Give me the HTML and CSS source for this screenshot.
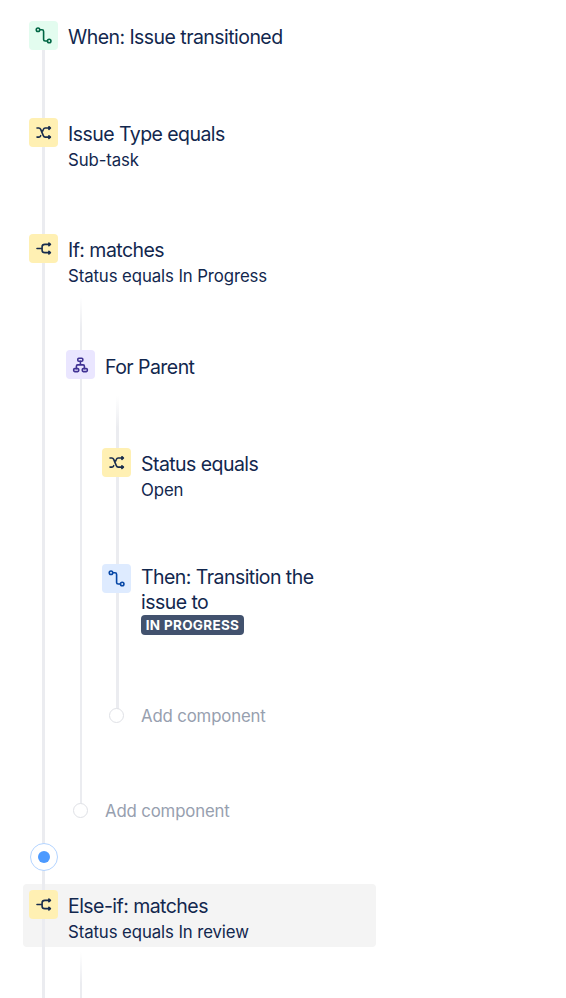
FILE: index.html
```html
<!DOCTYPE html>
<html lang="en">
<head>
    <meta charset="UTF-8">
    <meta name="viewport" content="width=device-width, initial-scale=1.0">
    <title>Automation rule</title>
    <link rel="stylesheet" href="styles.css">
</head>
<body>
<!-- shared icons -->
<svg class="sprite" width="0" height="0">
    <symbol id="transition" viewBox="0 0 29 29">
        <circle cx="9" cy="8.8" r="1.75"/>
        <circle cx="20.2" cy="20" r="1.75"/>
        <path d="M10.8 8.8h2.2q1.6 0 1.6 1.6v8q0 1.6 1.6 1.6h2.2"/>
    </symbol>
    <symbol id="shuffle" viewBox="0 0 29 29">
        <path d="M8 10h1.8q1.3 0 1.9 1.4l2.6 6.2q.6 1.5 1.9 1.5h4.6M8 19.1h1.8q1.3 0 1.9-1.4M13.7 12.9l.6-1.4q.6-1.5 1.9-1.5h4.6"/>
        <path d="M19.9 8.7l1.5 1.3-1.5 1.3zM19.9 17.8l1.5 1.3-1.5 1.3z"/>
    </symbol>
    <symbol id="branch" viewBox="0 0 29 29">
        <path d="M8 14.5h5.1M20.8 10.4h-4.9q-2.8 0-2.8 2.4v3.4q0 2.4 2.8 2.4h4.9"/>
        <path d="M19.9 9.1l1.5 1.3-1.5 1.3zM19.9 17.3l1.5 1.3-1.5 1.3z"/>
    </symbol>
    <symbol id="tree" viewBox="0 0 29 29">
        <rect x="11.8" y="8.3" width="5" height="3" rx="1"/>
        <rect x="7.7" y="18.6" width="5" height="3" rx="1"/>
        <rect x="16.3" y="18.6" width="5" height="3" rx="1"/>
        <path d="M14.4 11.3v3.6M10.4 18.6v-2.4q0-1.3 1.3-1.3h5.4q1.3 0 1.3 1.3v2.4"/>
    </symbol>
</svg>

<div class="rule">
    <div class="step step-trigger">
        <span class="icon green"><svg><use href="#transition"/></svg></span>
        <div class="info"><h3>When: Issue transitioned</h3></div>
    </div>
    <div class="step step-type">
        <span class="icon yellow"><svg><use href="#shuffle"/></svg></span>
        <div class="info">
            <h3>Issue Type equals</h3>
            <p>Sub-task</p>
        </div>
    </div>
    <div class="step step-if">
        <span class="icon yellow"><svg><use href="#branch"/></svg></span>
        <div class="info">
            <h3>If: matches</h3>
            <p>Status equals In Progress</p>
        </div>
    </div>

    <div class="branch">
        <div class="step step-parent">
            <span class="icon purple"><svg><use href="#tree"/></svg></span>
            <div class="info"><h3>For Parent</h3></div>
        </div>
        <div class="branch inner">
            <div class="step step-status">
                <span class="icon yellow"><svg><use href="#shuffle"/></svg></span>
                <div class="info">
                    <h3>Status equals</h3>
                    <p>Open</p>
                </div>
            </div>
            <div class="step step-then">
                <span class="icon blue"><svg><use href="#transition"/></svg></span>
                <div class="info wrap">
                    <h3>Then: Transition the issue to</h3>
                    <span class="status">IN PROGRESS</span>
                </div>
            </div>
            <div class="add"><i class="node"></i><span>Add component</span></div>
        </div>
        <div class="add"><i class="node"></i><span>Add component</span></div>
    </div>

    <div class="insert"><i></i></div>

    <div class="step selected">
        <span class="icon yellow"><svg><use href="#branch"/></svg></span>
        <div class="info">
            <h3>Else-if: matches</h3>
            <p>Status equals In review</p>
        </div>
    </div>
    <div class="branch last"></div>
</div>
</body>
</html>
```
FILE: styles.css
```css
*{
    box-sizing: border-box;
    margin: 0;
    padding: 0;
}
body{
    background: #fff;
    color: #12274e;
    font-family: Inter, "Liberation Sans", sans-serif;
}
.sprite{
    display: block;
}
.rule{
    position: relative;
    height: 998px;
    padding: 21px 0 0 29px;
    overflow: hidden;
}
/* vertical line behind the steps */
.rule::before,
.branch::before{
    content: "";
    position: absolute;
    z-index: 1;
    top: 0;
    bottom: 0;
    left: 13px;
    width: 3px;
    background: #ebecf0;
}
.rule::before{
    top: 30px;
    left: 42px;
}
.branch{
    position: relative;
    margin-left: 37px;
    padding-top: 53px;
}
.branch::before{
    left: 14px;
    width: 2px;
    bottom: 14px;
    background: linear-gradient(#fff, #ebecf0 32px);
}
.branch.inner{
    margin-left: 36px;
    margin-bottom: 80px;
    padding-top: 52px;
}
.branch.inner::before{
    width: 3px;
}

.step{
    display: flex;
    gap: 10px;
}
.step-trigger{
    height: 97px;
}
.step-type{
    height: 116px;
}
.step-if{
    height: 63px;
}
.step-parent{
    height: 46px;
}
.step-status{
    height: 116px;
}
.step-then{
    height: 144px;
}
.icon{
    position: relative;
    z-index: 2;
    flex: none;
    width: 29px;
    height: 29px;
    border-radius: 4px;
}
.icon svg{
    display: block;
    width: 29px;
    height: 29px;
    fill: none;
    stroke: currentColor;
    stroke-width: 1.6;
    stroke-linecap: round;
    stroke-linejoin: round;
}
.green{
    background: #e3fcef;
    color: #006644;
}
.yellow{
    background: #fff0b3;
    color: #172b4d;
}
.purple{
    background: #eae6ff;
    color: #403294;
}
.blue{
    background: #deebff;
    color: #0747a6;
}
.info{
    padding-top: 4px;
    white-space: nowrap;
}
.info h3{
    font-size: 19.5px;
    font-weight: 400;
    line-height: 25px;
    letter-spacing: -0.55px;
}
.info p{
    font-size: 16.8px;
    line-height: 26px;
    letter-spacing: -0.1px;
}
.step-parent .info{
    padding-top: 5px;
}
.info.wrap{
    width: 190px;
    padding-top: 1px;
    white-space: normal;
}
.status{
    display: block;
    width: 103px;
    height: 20px;
    border-radius: 4px;
    background: #42526e;
    color: #fff;
    font-size: 13.5px;
    font-weight: 700;
    line-height: 20px;
    letter-spacing: 0.3px;
    text-align: center;
    white-space: nowrap;
}

.add{
    display: flex;
    align-items: center;
    gap: 17px;
    height: 15px;
    margin-left: 7px;
    color: #97a0af;
    font-size: 16.8px;
    letter-spacing: -0.15px;
    white-space: nowrap;
}
.node{
    position: relative;
    z-index: 2;
    width: 15px;
    height: 15px;
    border: 1px solid #dfe1e6;
    border-radius: 50%;
    background: #fff;
}

.insert{
    position: relative;
    z-index: 2;
    display: flex;
    align-items: center;
    justify-content: center;
    width: 28px;
    height: 28px;
    margin: 25px 0 13px 1px;
    border: 1px solid #b3d4ff;
    border-radius: 50%;
    background: #fff;
}
.insert i{
    width: 12px;
    height: 12px;
    border-radius: 50%;
    background: #4c9aff;
}
.selected{
    width: 353px;
    height: 63px;
    margin-left: -6px;
    padding: 6px;
    border-radius: 4px;
    background: #f4f4f4;
}
.branch.last{
    height: 60px;
    margin-top: 5px;
}
```
